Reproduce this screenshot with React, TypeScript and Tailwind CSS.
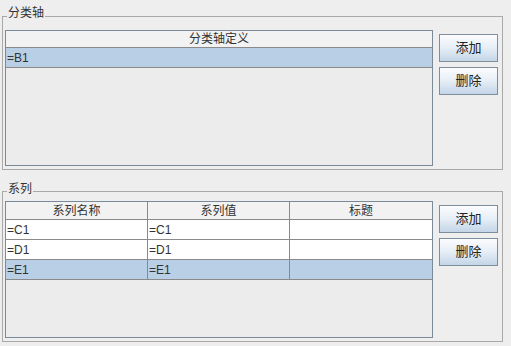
import React from "react";

const font = { fontFamily: '"Liberation Sans", "Noto Sans CJK SC", sans-serif' };

function Btn({ label }: { label: string }) {
  return (
    <div className="w-[59px] h-[28px] border border-[#7f8e9c] bg-gradient-to-b from-[#fbfcfe] via-[#e6eef6] to-[#c3d5e7] flex items-center justify-center text-[13px] text-[#222]">
      {label}
    </div>
  );
}

export default function App() {
  return (
    <div className="w-[511px] h-[346px] bg-[#eeeeee] text-[#333] overflow-hidden" style={font}>
      <div className="flex flex-col pl-[2px] pt-[16px]">
        {/* Group 1 */}
        <div className="relative w-[501px] h-[154px] border border-[#a9a9a9] pl-[2px] pt-[13px] flex gap-[6px]">
          <span className="absolute left-[4px] top-[-12px] px-[1px] bg-[#eeeeee] text-[12px] leading-[16px] text-[#333]">
            分类轴
          </span>
          <div className="w-[428px] h-[136px] border border-[#7a8a99] bg-[#ececec] flex flex-col text-[12px]">
            <div className="h-[17px] bg-[#f2f2f2] border-b border-[#8a8a8a] flex items-center justify-center">
              分类轴定义
            </div>
            <div className="h-[20px] bg-[#b8cfe5] border-b border-[#8a8a8a] flex items-center pl-[1px]">
              =B1
            </div>
          </div>
          <div className="flex flex-col gap-[5px] pt-[4px]">
            <Btn label="添加" />
            <Btn label="删除" />
          </div>
        </div>

        {/* Group 2 */}
        <div className="relative mt-[21px] w-[501px] h-[151px] border border-[#a9a9a9] pl-[2px] pt-[9px] flex gap-[6px]">
          <span className="absolute left-[4px] top-[-11px] px-[1px] bg-[#eeeeee] text-[12px] leading-[16px] text-[#333]">
            系列
          </span>
          <div className="w-[428px] h-[137px] border border-[#7a8a99] bg-[#ececec] flex flex-col text-[12px]">
            <div className="h-[18px] bg-[#f2f2f2] border-b border-[#8a8a8a] grid grid-cols-[142px_142px_142px]">
              <div className="border-r border-[#8a8a8a] flex items-center justify-center">系列名称</div>
              <div className="border-r border-[#8a8a8a] flex items-center justify-center">系列值</div>
              <div className="flex items-center justify-center">标题</div>
            </div>
            {[
              ["=C1", "=C1", false],
              ["=D1", "=D1", false],
              ["=E1", "=E1", true],
            ].map(([a, b, sel], i) => (
              <div
                key={i}
                className={
                  "h-[20px] border-b border-[#8a8a8a] grid grid-cols-[142px_142px_142px] " +
                  (sel ? "bg-[#b8cfe5]" : "bg-white")
                }
              >
                <div className="border-r border-[#8a8a8a] flex items-center pl-[1px]">{a as string}</div>
                <div className="border-r border-[#8a8a8a] flex items-center pl-[1px]">{b as string}</div>
                <div></div>
              </div>
            ))}
          </div>
          <div className="flex flex-col gap-[5px] pt-[4px]">
            <Btn label="添加" />
            <Btn label="删除" />
          </div>
        </div>
      </div>
    </div>
  );
}
